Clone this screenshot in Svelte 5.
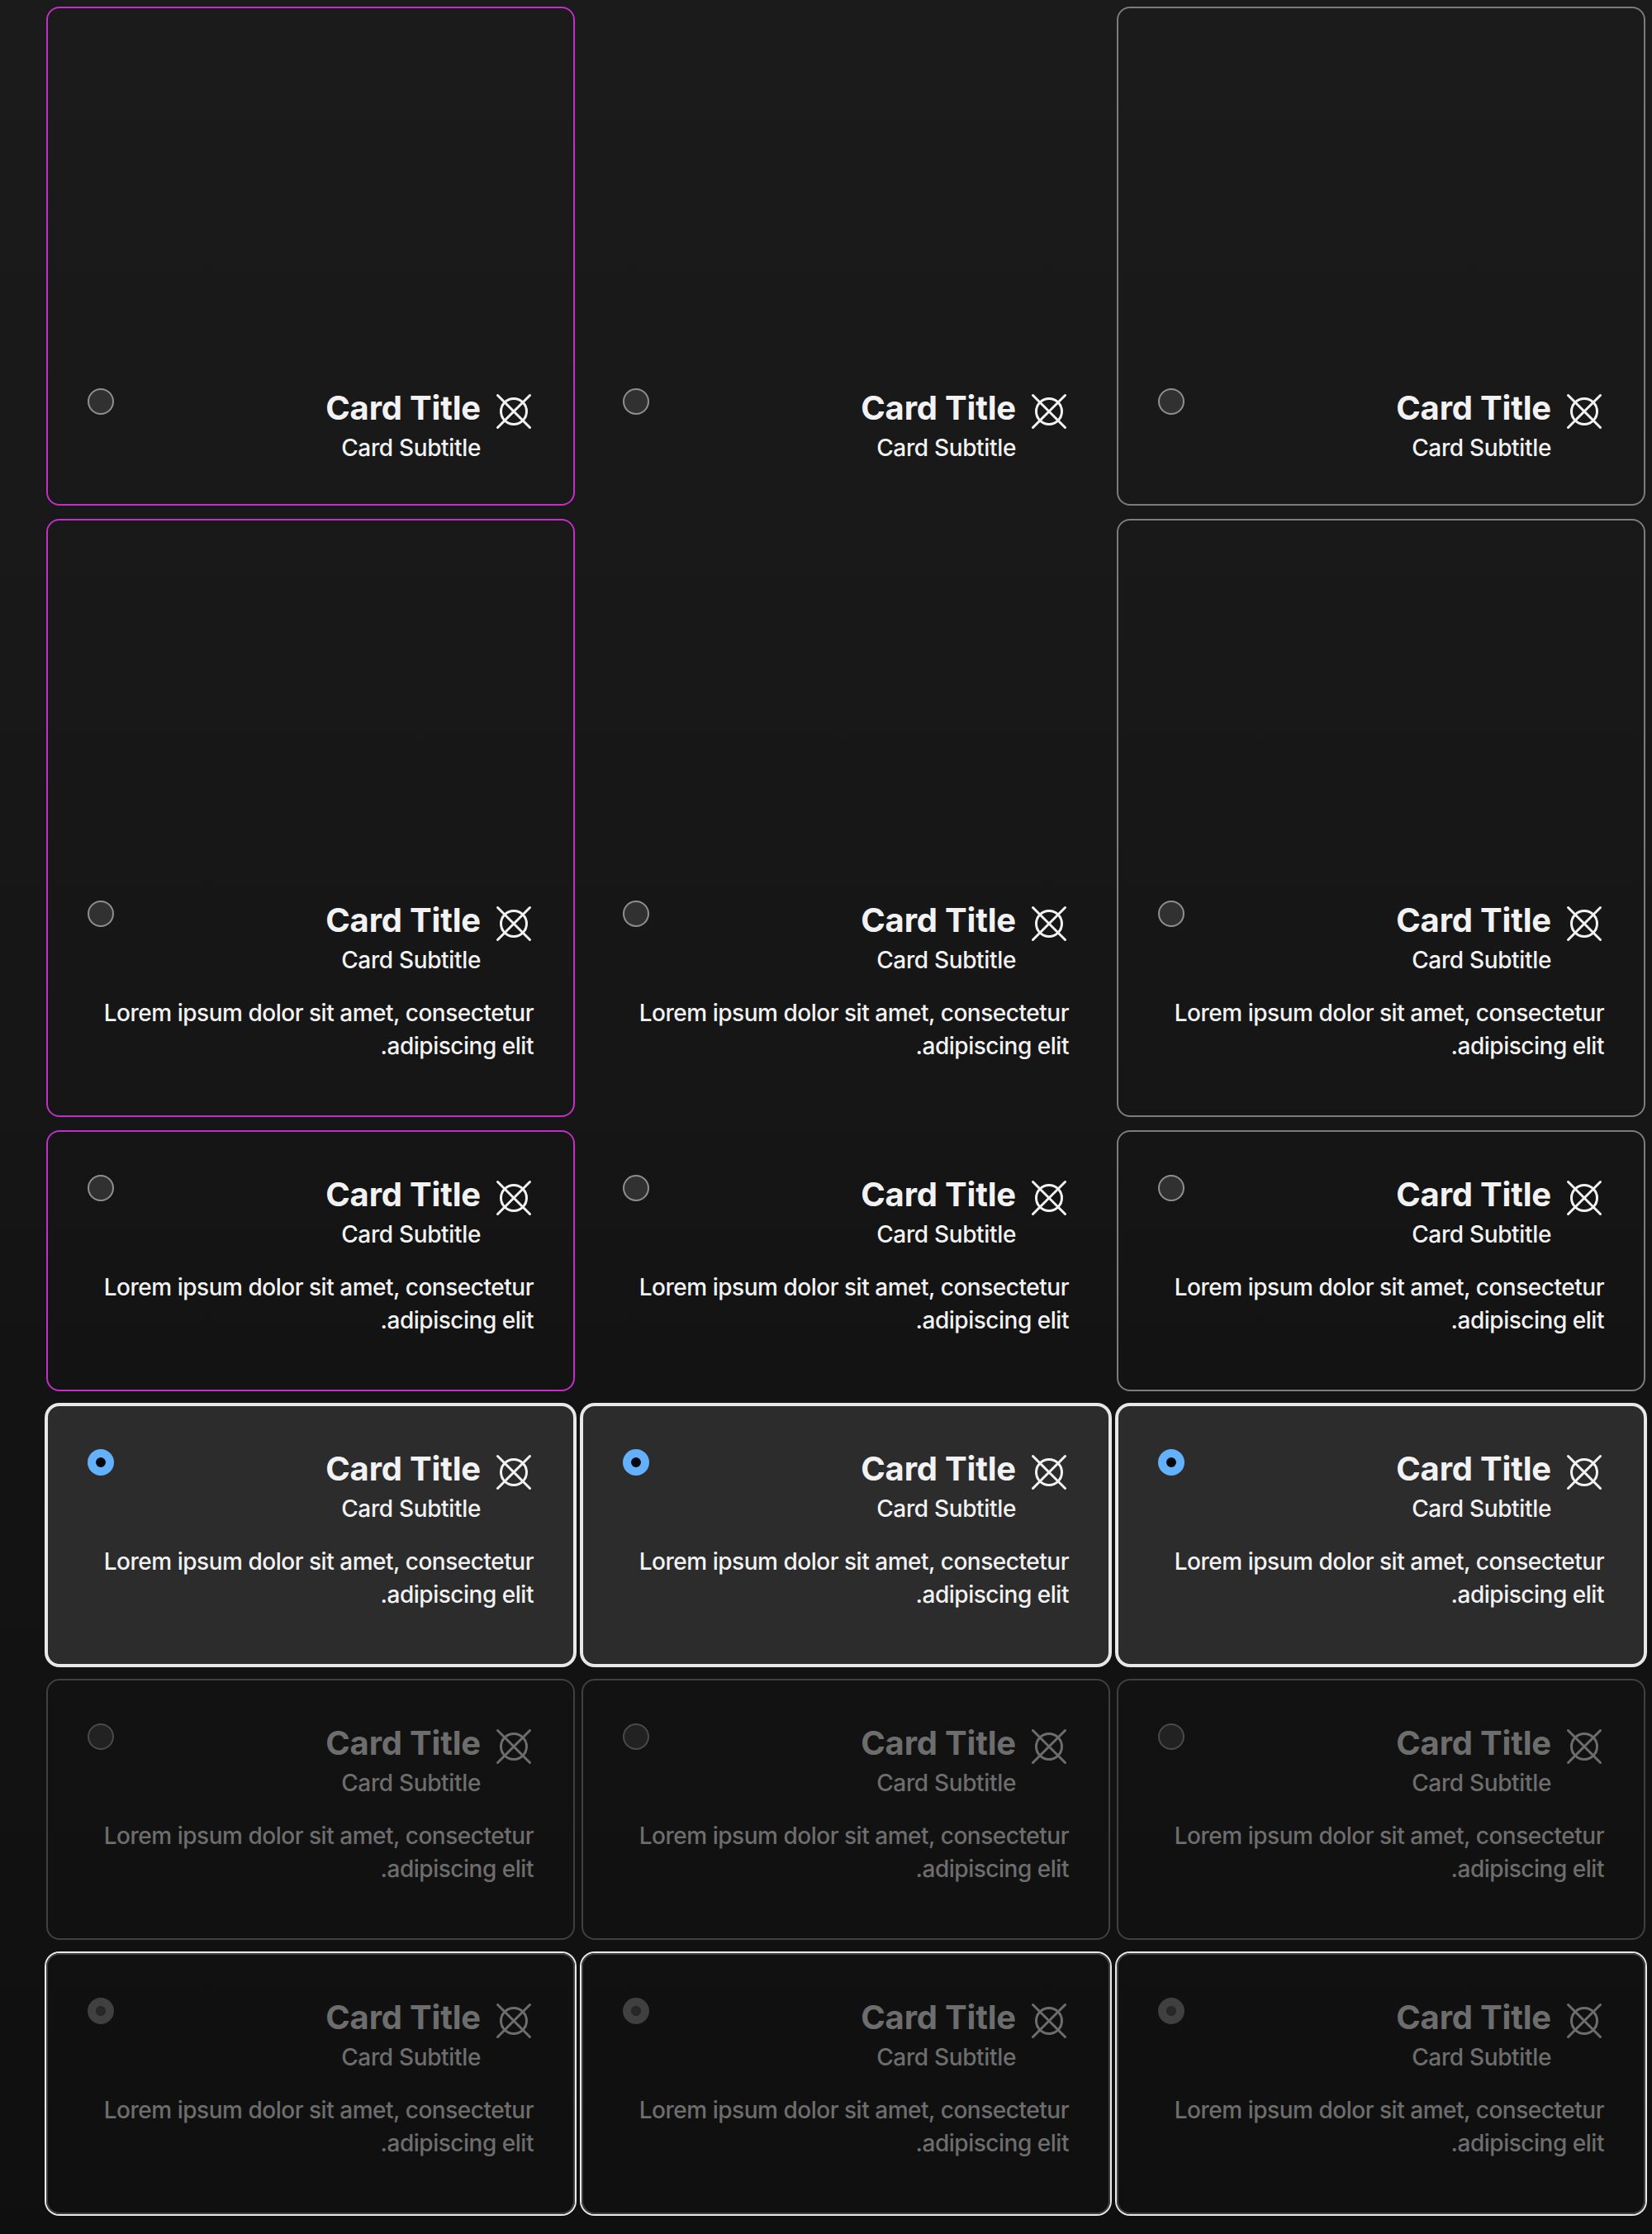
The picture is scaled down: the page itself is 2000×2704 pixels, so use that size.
<script>
  const rows = [
    { media: true, body: false, state: 'idle' },
    { media: true, body: true, state: 'idle' },
    { media: false, body: true, state: 'idle' },
    { media: false, body: true, state: 'selected' },
    { media: false, body: true, state: 'disabled' },
    { media: false, body: true, state: 'disabled picked' }
  ];
  const variants = ['accent', 'plain', 'outlined'];
</script>

<main dir="rtl">
  {#each rows as row}
    <div class="row">
      {#each variants as variant}
        <section class="card {variant} {row.state}">
          {#if row.media}<div class="media"></div>{/if}
          <header>
            <svg class="icon" viewBox="0 0 48 48" fill="none" stroke="currentColor" stroke-width="3" stroke-linecap="round">
              <circle cx="24" cy="24" r="15.5" />
              <path d="M4.5 4.5 43.5 43.5M43.5 4.5 4.5 43.5" />
            </svg>
            <div class="titles">
              <h2>Card Title</h2>
              <h3>Card Subtitle</h3>
            </div>
            <span class="radio"></span>
          </header>
          {#if row.body}<p>Lorem ipsum dolor sit amet, consectetur adipiscing elit.</p>{/if}
        </section>
      {/each}
    </div>
  {/each}
</main>

<style>
  :global(body) {
    background: #0f0f0f;
  }
  main {
    box-sizing: border-box;
    width: 2000px;
    height: 2704px;
    padding: 8px 8px 0 56px;
    display: flex;
    flex-direction: column;
    gap: 16px;
    background: linear-gradient(#1b1b1b, #161616 46%, #131313 63%, #111 87%, #0f0f0f);
    font-family: Inter, 'Liberation Sans', sans-serif;
    color: #f2f2f2;
  }
  .row {
    display: grid;
    grid-template-columns: repeat(3, 640px);
    gap: 8px;
    direction: ltr;
  }
  .card {
    direction: rtl;
    box-sizing: border-box;
    padding: 48px 48px 50px;
    border: 2px solid transparent;
    border-radius: 16px;
  }
  .media {
    height: 408px;
  }
  .accent {
    border-color: #c22ec6;
  }
  .outlined {
    border-color: #7c7c7c;
  }
  .selected {
    background: #2c2c2c;
    border-color: #e8e8e8;
    box-shadow: 0 0 0 2px #e8e8e8;
  }
  .disabled {
    border-color: #404040;
    color: #6d6d6d;
  }
  .picked {
    box-shadow: 0 0 0 2px #e8e8e8;
  }
  header {
    display: flex;
    align-items: flex-start;
    height: 94px;
  }
  .icon {
    width: 48px;
    height: 48px;
    margin-top: 8px;
    flex: none;
  }
  .titles {
    margin: 4px 16px 0 auto;
  }
  h2,
  h3,
  p {
    margin: 0;
  }
  h2 {
    font-size: 40px;
    line-height: 48px;
    font-weight: 700;
    letter-spacing: -0.2px;
  }
  h3 {
    margin-top: 6px;
    font-size: 28px;
    line-height: 36px;
    font-weight: 500;
    letter-spacing: -0.35px;
  }
  .radio {
    box-sizing: border-box;
    width: 32px;
    height: 32px;
    margin-top: 4px;
    border: 2px solid #8f8f8f;
    border-radius: 50%;
    background: #313131;
    flex: none;
  }
  .selected .radio {
    border: 10px solid #63b1fa;
    background: #03080f;
    background-clip: padding-box;
  }
  .disabled .radio {
    border-color: #4a4a4a;
    background: #222;
  }
  .picked .radio {
    border: 10px solid #404040;
    background: #272727;
    background-clip: padding-box;
  }
  p {
    margin-top: 26px;
    height: 94px;
    font-size: 28px;
    line-height: 40px;
    font-weight: 500;
    letter-spacing: -0.48px;
  }
</style>
